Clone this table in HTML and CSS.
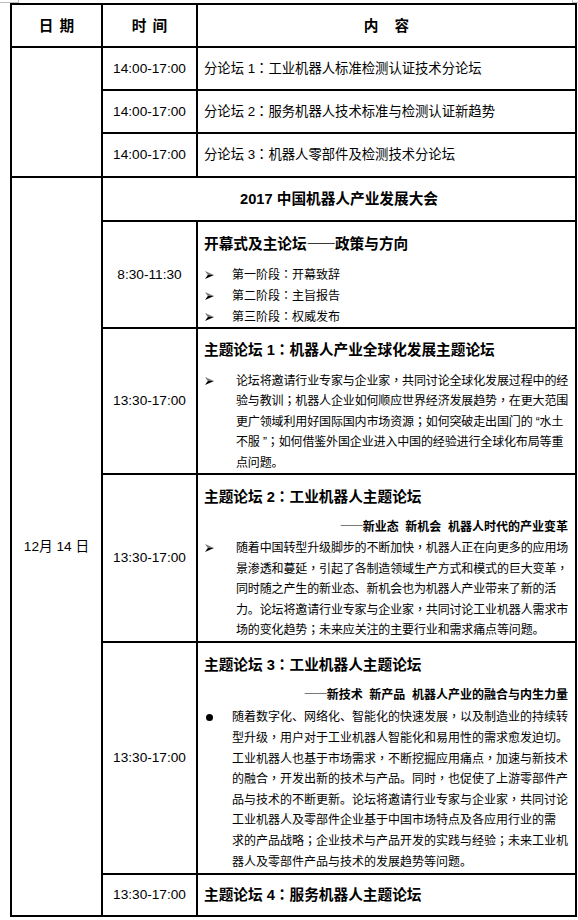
FILE: index.html
```html
<!DOCTYPE html>
<html lang="zh-CN">
<head>
<meta charset="utf-8">
<title>日程</title>
<link rel="stylesheet" href="styles.css">
</head>
<body>
<div class="mark mark-tl"></div>
<div class="mark mark-tr"></div>
<table class="schedule">
  <colgroup><col class="c-date"><col class="c-time"><col class="c-content"></colgroup>
  <thead>
    <tr class="r-head">
      <th>日 期</th>
      <th>时 间</th>
      <th class="wide">内 容</th>
    </tr>
  </thead>
  <tbody>
    <tr class="r-sub">
      <td rowspan="3"></td>
      <td class="time">14:00-17:00</td>
      <td class="sub">分论坛 1<span class="p" lang="zh-TW">：</span>工业机器人标准检测认证技术分论坛</td>
    </tr>
    <tr class="r-sub">
      <td class="time">14:00-17:00</td>
      <td class="sub">分论坛 2<span class="p" lang="zh-TW">：</span>服务机器人技术标准与检测认证新趋势</td>
    </tr>
    <tr class="r-sub r-sub-last">
      <td class="time">14:00-17:00</td>
      <td class="sub">分论坛 3<span class="p" lang="zh-TW">：</span>机器人零部件及检测技术分论坛</td>
    </tr>
    <tr class="r-conf">
      <td rowspan="6" class="date">12月 14 日</td>
      <td colspan="2" class="conf">2017 中国机器人产业发展大会</td>
    </tr>
    <tr class="r-open">
      <td class="time">8:30-11:30</td>
      <td class="content">
        <div class="title">开幕式及主论坛<span class="dash">——</span>政策与方向</div>
        <ul class="list list-open">
          <li><span class="marker"><svg class="arr" viewBox="0 0 9 8" width="9" height="8"><path d="M0 0L9 4H2.8Z" fill="#7a7a7a"/><path d="M2.8 4H9L0 8Z" fill="#000"/></svg></span><span class="txt">第一阶段<span class="p" lang="zh-TW">：</span>开幕致辞</span></li>
          <li><span class="marker"><svg class="arr" viewBox="0 0 9 8" width="9" height="8"><path d="M0 0L9 4H2.8Z" fill="#7a7a7a"/><path d="M2.8 4H9L0 8Z" fill="#000"/></svg></span><span class="txt">第二阶段<span class="p" lang="zh-TW">：</span>主旨报告</span></li>
          <li><span class="marker"><svg class="arr" viewBox="0 0 9 8" width="9" height="8"><path d="M0 0L9 4H2.8Z" fill="#7a7a7a"/><path d="M2.8 4H9L0 8Z" fill="#000"/></svg></span><span class="txt">第三阶段<span class="p" lang="zh-TW">：</span>权威发布</span></li>
        </ul>
      </td>
    </tr>
    <tr class="r-t1">
      <td class="time">13:30-17:00</td>
      <td class="content">
        <div class="title title-t1">主题论坛 1<span class="p" lang="zh-TW">：</span>机器人产业全球化发展主题论坛</div>
        <ul class="list list-arrow list-t1">
          <li><span class="marker"><svg class="arr" viewBox="0 0 9 8" width="9" height="8"><path d="M0 0L9 4H2.8Z" fill="#7a7a7a"/><path d="M2.8 4H9L0 8Z" fill="#000"/></svg></span><span class="txt">论坛将邀请行业专家与企业家<span class="p" lang="zh-TW">，</span>共同讨论全球化发展过程中的经<br>验与教训<span class="p" lang="zh-TW">；</span>机器人企业如何顺应世界经济发展趋势<span class="p" lang="zh-TW">，</span>在更大范围<br>更广领域利用好国际国内市场资源<span class="p" lang="zh-TW">；</span>如何突破走出国门的 “水土<br>不服 ”<span class="p" lang="zh-TW">；</span>如何借鉴外国企业进入中国的经验进行全球化布局等重<br>点问题。</span></li>
        </ul>
      </td>
    </tr>
    <tr class="r-t2">
      <td class="time">13:30-17:00</td>
      <td class="content">
        <div class="title">主题论坛 2<span class="p" lang="zh-TW">：</span>工业机器人主题论坛</div>
        <div class="subtitle"><span class="dash">——</span>新业态&nbsp; 新机会&nbsp; 机器人时代的产业变革</div>
        <ul class="list list-arrow">
          <li><span class="marker"><svg class="arr" viewBox="0 0 9 8" width="9" height="8"><path d="M0 0L9 4H2.8Z" fill="#7a7a7a"/><path d="M2.8 4H9L0 8Z" fill="#000"/></svg></span><span class="txt">随着中国转型升级脚步的不断加快<span class="p" lang="zh-TW">，</span>机器人正在向更多的应用场<br>景渗透和蔓延<span class="p" lang="zh-TW">，</span>引起了各制造领域生产方式和模式的巨大变革<span class="p" lang="zh-TW">，</span><br>同时随之产生的新业态、新机会也为机器人产业带来了新的活<br>力。论坛将邀请行业专家与企业家<span class="p" lang="zh-TW">，</span>共同讨论工业机器人需求市<br>场的变化趋势<span class="p" lang="zh-TW">；</span>未来应关注的主要行业和需求痛点等问题。</span></li>
        </ul>
      </td>
    </tr>
    <tr class="r-t3">
      <td class="time">13:30-17:00</td>
      <td class="content">
        <div class="title">主题论坛 3<span class="p" lang="zh-TW">：</span>工业机器人主题论坛</div>
        <div class="subtitle subtitle-t3"><span class="dash">——</span>新技术&nbsp; 新产品&nbsp; 机器人产业的融合与内生力量</div>
        <ul class="list list-dot">
          <li><span class="marker"><span class="dot"></span></span><span class="txt">随着数字化、网络化、智能化的快速发展<span class="p" lang="zh-TW">，</span>以及制造业的持续转<br>型升级<span class="p" lang="zh-TW">，</span>用户对于工业机器人智能化和易用性的需求愈发迫切。<br>工业机器人也基于市场需求<span class="p" lang="zh-TW">，</span>不断挖掘应用痛点<span class="p" lang="zh-TW">，</span>加速与新技术<br>的融合<span class="p" lang="zh-TW">，</span>开发出新的技术与产品。同时<span class="p" lang="zh-TW">，</span>也促使了上游零部件产<br>品与技术的不断更新。论坛将邀请行业专家与企业家<span class="p" lang="zh-TW">，</span>共同讨论<br>工业机器人及零部件企业基于中国市场特点及各应用行业的需<br>求的产品战略<span class="p" lang="zh-TW">；</span>企业技术与产品开发的实践与经验<span class="p" lang="zh-TW">；</span>未来工业机<br>器人及零部件产品与技术的发展趋势等问题。</span></li>
        </ul>
      </td>
    </tr>
    <tr class="r-t4">
      <td class="time">13:30-17:00</td>
      <td class="content content-solo">
        <div class="title title-solo">主题论坛 4<span class="p" lang="zh-TW">：</span>服务机器人主题论坛</div>
      </td>
    </tr>
  </tbody>
</table>
</body>
</html>
```

FILE: styles.css
```css
html, body {
  margin: 0;
  padding: 0;
  background: #fff;
}

body {
  position: relative;
  font-family: "Liberation Sans", "Noto Sans CJK SC", sans-serif;
  color: #000;
  width: 578px;
  height: 920px;
  overflow: hidden;
}

/* full-width punctuation drawn centred in its cell (locale glyph forms) */
.p {
  font-variant-east-asian: normal;
}

.dash {
  font-family: "Noto Sans CJK SC", sans-serif;
  line-height: 0;
  letter-spacing: -1px;
}

.mark {
  position: absolute;
  top: 0;
  height: 2px;
  border-bottom: 1px solid #bdbdbd;
}

.mark-tl {
  left: 0;
  width: 18px;
  border-right: 1px solid #bdbdbd;
}

.mark-tr {
  left: 572px;
  width: 6px;
  border-left: 1px solid #bdbdbd;
}

.schedule {
  border-collapse: collapse;
  table-layout: fixed;
  width: 567px;
  margin: 3px 0 0 10px;
}

.c-date { width: 91px; }
.c-time { width: 95px; }
.c-content { width: 379px; }

.schedule th,
.schedule td {
  border: 2px solid #000;
  padding: 0;
}

.r-head { height: 43px; }
.r-sub { height: 43px; }
.r-sub-last { height: 44px; }
.r-conf { height: 44px; }
.r-open { height: 107px; }
.r-t1 { height: 146px; }
.r-t2 { height: 168px; }
.r-t3 { height: 232px; }
.r-t4 { height: 42px; }

.schedule th {
  font-size: 14.67px;
  font-weight: 700;
  text-align: center;
  vertical-align: middle;
  word-spacing: 2px;
  line-height: 20px;
}

.schedule th.wide {
  word-spacing: 12px;
}

.time {
  font-size: 13.67px;
  text-align: center;
  vertical-align: middle;
  white-space: nowrap;
  line-height: 20px;
}

.sub {
  font-size: 13.33px;
  padding-left: 6px !important;
  vertical-align: middle;
  white-space: nowrap;
  line-height: 20px;
}

.date {
  font-size: 13.67px;
  text-align: center;
  vertical-align: middle;
  line-height: 20px;
}

.conf {
  font-size: 14.67px;
  font-weight: 700;
  text-align: center;
  vertical-align: middle;
  line-height: 20px;
}

.content {
  vertical-align: top;
  padding: 0 6px !important;
}

.content-solo {
  vertical-align: middle;
}

.title {
  font-size: 14.67px;
  font-weight: 700;
  line-height: 22px;
  margin: 11px 0 10px;
  white-space: nowrap;
}

.title-t1 {
  margin: 10px 0 9.5px;
}

.title-solo {
  margin: 0;
}

.subtitle {
  font-size: 12px;
  font-weight: 700;
  line-height: 20.6px;
  text-align: right;
  white-space: nowrap;
  margin-top: -1px;
  padding-right: 1px;
}

.subtitle-t3 {
  margin-bottom: 1.5px;
}

.list {
  list-style: none;
  margin: 0;
  padding: 0;
  font-size: 12px;
  line-height: 20.6px;
}

.list li {
  display: flex;
  align-items: flex-start;
}

.marker {
  flex: 0 0 32px;
  height: 20.6px;
  display: flex;
  align-items: center;
  padding-left: 1px;
  box-sizing: border-box;
}

.list-open {
  line-height: 20.8px;
}

.list-open .marker {
  flex-basis: 28px;
  height: 20.8px;
}

.list-t1 {
  line-height: 20.4px;
}

.list-t1 .marker {
  height: 20.4px;
}

.list-dot .marker {
  flex-basis: 28px;
  padding-left: 2px;
}

.arr {
  display: block;
}

.dot {
  display: block;
  width: 7px;
  height: 7px;
  border-radius: 50%;
  background: #000;
}

.txt {
  white-space: nowrap;
}

.list-arrow .txt,
.list-t1 .txt {
  letter-spacing: -0.14px;
}
```
